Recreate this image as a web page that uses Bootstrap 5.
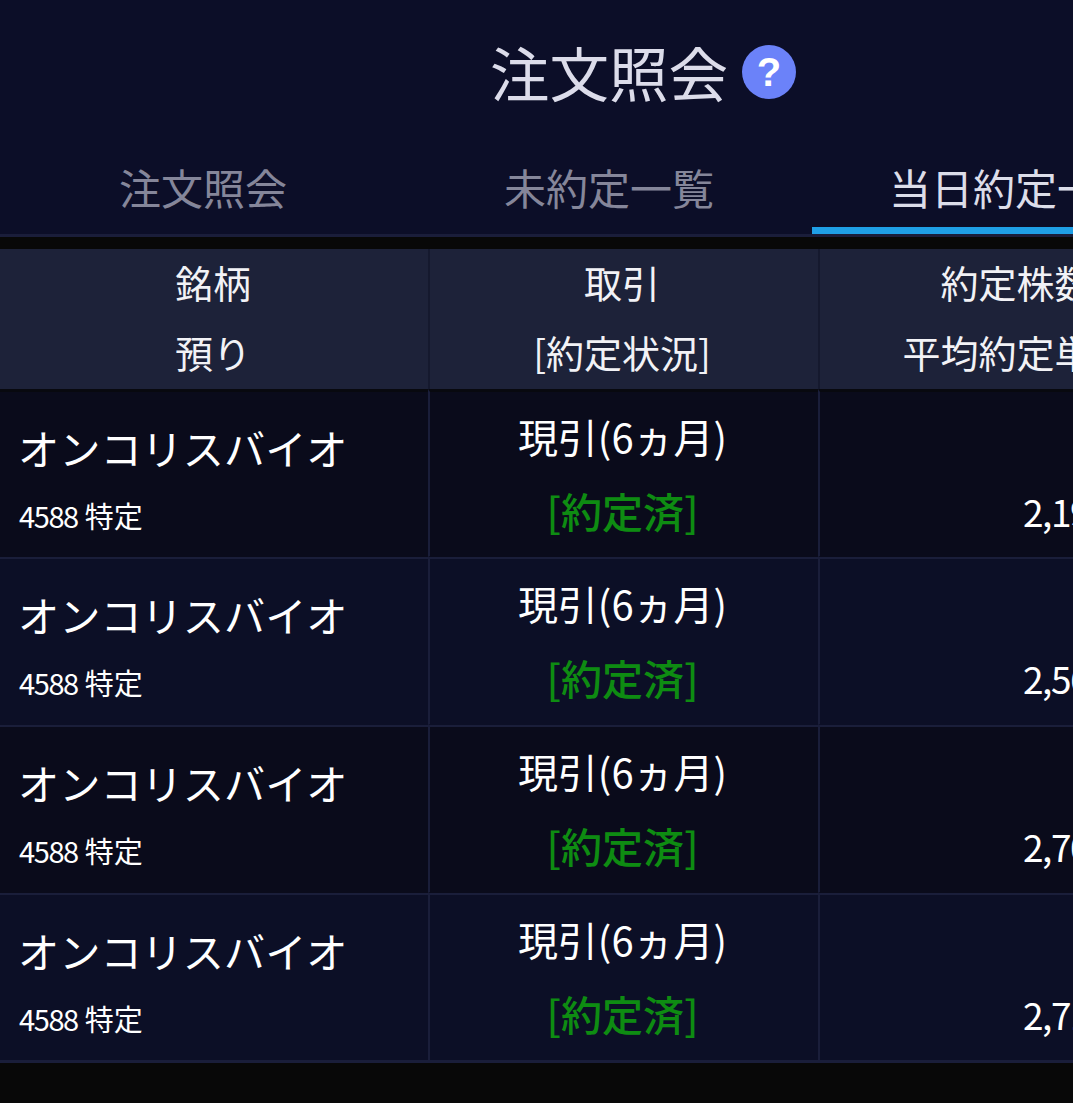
<!DOCTYPE html>
<html lang="ja">
<head>
    <meta charset="UTF-8">
    <meta name="viewport" content="width=device-width, initial-scale=1.0">
    <title>注文照会</title>
    <link href="https://cdn.jsdelivr.net/npm/bootstrap@5.3.0/dist/css/bootstrap.min.css" rel="stylesheet">
    <style>
        html, body {
            height: 100%;
        }
        body {
            background-color: #080808;
            color: #fff;
            overflow: hidden;
            font-family: "Noto Sans CJK JP", "Noto Sans", sans-serif;
        }
        .order-page {
            width: 1220px;
        }
        .page-head {
            background-color: #0c0e28;
            height: 237px;
            border-bottom: 3px solid #1a1d3a;
        }
        .page-title {
            height: 143px;
            padding-left: 490px;
        }
        .page-title h1 {
            font-size: 59.5px;
            font-weight: 400;
            color: #dcdcea;
            margin: 0;
            line-height: 1;
        }
        .help-mark {
            width: 54px;
            height: 54px;
            margin-left: 14px;
            background-color: #6b82f9;
            font-size: 40px;
            font-weight: 700;
            line-height: 54px;
            font-family: "Liberation Sans", sans-serif;
        }
        .tab-item {
            width: 406px;
            height: 91px;
            font-size: 42px;
            line-height: 1;
            padding-top: 23px;
            color: #85869a;
            text-align: center;
        }
        .tab-active {
            color: #dcdde9;
            border-bottom: 7px solid #1f9fe6;
        }
        .order-table {
            margin-top: 12px;
            margin-bottom: 0;
            width: 1220px;
            table-layout: fixed;
            border-collapse: separate;
            border-spacing: 0;
            --bs-table-bg: transparent;
            --bs-table-color: #fff;
            --bs-table-border-color: transparent;
        }
        .order-table th {
            background-color: #1d2239;
            font-size: 38px;
            font-weight: 400;
            line-height: 70px;
            height: 140px;
            padding: 0 2px 0 0;
            text-align: center;
            color: #f2f2f6;
            vertical-align: top;
            border-bottom: 0;
        }
        .order-table th + th {
            border-left: 2px solid #15192e;
            padding-right: 4px;
        }
        .order-table th:last-child {
            padding-right: 7px;
        }
        .head-lines {
            margin-top: -2px;
        }
        .order-table td {
            height: 168px;
            padding: 0;
            vertical-align: top;
            border-top: 2px solid #1a1e3a;
        }
        .order-table tbody tr:first-child td {
            border-top: 3px solid #08090f;
        }
        .order-table td + td {
            border-left: 2px solid #1a1e3a;
        }
        .order-table tbody tr:nth-child(odd) td {
            background-color: #0a0b1b;
        }
        .order-table tbody tr:nth-child(even) td {
            background-color: #0c0f26;
        }
        .order-table tbody tr:last-child td {
            height: 170px;
            border-bottom: 3px solid #1a1e3a;
        }
        .stock-name {
            font-size: 41.2px;
            line-height: 1;
            padding: 35px 0 0 18px;
            white-space: nowrap;
        }
        .stock-code {
            font-size: 29px;
            line-height: 1;
            padding: 33px 0 0 19px;
            white-space: nowrap;
        }
        .num-text {
            display: inline-block;
            letter-spacing: -1.4px;
            margin-right: 7px;
        }
        .trade-type {
            font-size: 40px;
            line-height: 1;
            padding: 24px 3px 0 0;
            text-align: center;
            white-space: nowrap;
        }
        .trade-state {
            font-size: 41px;
            font-weight: 500;
            line-height: 1;
            padding: 34px 3px 0 0;
            text-align: center;
            color: #0e8c12;
            white-space: nowrap;
        }
        .fill-price {
            font-size: 37px;
            letter-spacing: -1.5px;
            line-height: 1;
            padding: 101px 112px 0 0;
            text-align: right;
            white-space: nowrap;
        }
    </style>
</head>
<body>
    <div class="order-page">
        <!-- ヘッダー -->
        <div class="page-head">
            <div class="page-title d-flex align-items-center">
                <h1>注文照会</h1>
                <span class="help-mark rounded-circle text-center text-white flex-shrink-0">?</span>
            </div>
            <div class="d-flex">
                <div class="tab-item">注文照会</div>
                <div class="tab-item">未約定一覧</div>
                <div class="tab-item tab-active">当日約定一覧</div>
            </div>
        </div>

        <!-- 約定一覧 -->
        <table class="table order-table">
            <colgroup>
                <col width="428">
                <col width="390">
                <col width="402">
            </colgroup>
            <thead>
                <tr>
                    <th><div class="head-lines">銘柄<br>預り</div></th>
                    <th><div class="head-lines">取引<br>[約定状況]</div></th>
                    <th><div class="head-lines">約定株数<br>平均約定単価</div></th>
                </tr>
            </thead>
            <tbody id="rows"></tbody>
        </table>
    </div>

    <script src="https://cdn.jsdelivr.net/npm/bootstrap@5.3.0/dist/js/bootstrap.bundle.min.js"></script>
    <script>
        const prices = ['2,190', '2,560', '2,700', '2,710'];
        document.getElementById('rows').innerHTML = prices.map(p => `
            <tr>
                <td>
                    <div class="stock-name">オンコリスバイオ</div>
                    <div class="stock-code"><span class="num-text">4588</span>特定</div>
                </td>
                <td>
                    <div class="trade-type">現引(6ヵ月)</div>
                    <div class="trade-state">[約定済]</div>
                </td>
                <td><div class="fill-price">${p}</div></td>
            </tr>`).join('');
    </script>
</body>
</html>
